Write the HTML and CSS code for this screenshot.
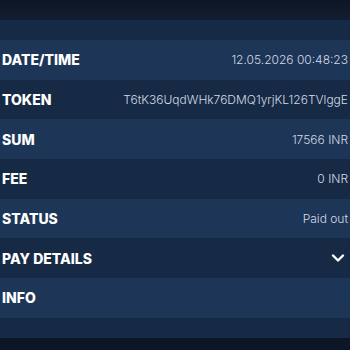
FILE: index.html
```html
<!DOCTYPE html>
<html>
<head>
<meta charset="utf-8">
<link rel="stylesheet" href="styles.css">
</head>
<body>
<div class="screen">
  <div class="fade-top"></div>
  <div class="row dark"></div>
  <div class="row light"><span class="label">DATE/TIME</span><span class="value">12.05.2026 00:48:23</span></div>
  <div class="row dark"><span class="label">TOKEN</span><span class="value">T6tK36UqdWHk76DMQ1yrjKL126TVlggE</span></div>
  <div class="row light"><span class="label">SUM</span><span class="value">17566 INR</span></div>
  <div class="row dark"><span class="label">FEE</span><span class="value">0 INR</span></div>
  <div class="row light"><span class="label">STATUS</span><span class="value">Paid out</span></div>
  <div class="row dark"><span class="label">PAY DETAILS</span>
    <svg class="chev" width="14" height="10" viewBox="0 0 14 10"><path d="M2 2.5 L7 7.5 L12 2.5" fill="none" stroke="#ffffff" stroke-width="2.4" stroke-linecap="round" stroke-linejoin="round"/></svg>
  </div>
  <div class="row light"><span class="label">INFO</span></div>
  <div class="row dark"></div>
  <div class="fade-bottom"></div>
</div>
</body>
</html>
```
FILE: styles.css
```css
html, body {
  margin: 0;
  padding: 0;
  background: #0e1828;
}
.screen {
  width: 350px;
  height: 350px;
  display: flex;
  flex-direction: column;
  overflow: hidden;
  font-family: "Inter", "Noto Sans", sans-serif;
}
.fade-top {
  height: 20px;
  flex: none;
  background: linear-gradient(#0d1625, #111d31);
}
.row {
  height: 39.7px;
  flex: none;
  display: flex;
  align-items: center;
  justify-content: space-between;
  padding: 0 2px;
  box-sizing: border-box;
}
.fade-top + .row { height: 20px; }
.row:empty { height: 20px; }
.light { background: #1d3557; }
.dark { background: #172a45; }
.label {
  color: #ffffff;
  font-weight: 800;
  font-size: 14px;
}
.value {
  color: #d3dae6;
  font-weight: 300;
  font-size: 12px;
}
.chev { margin-right: 3px; }
.fade-bottom {
  flex: 1;
  background: #0d1626;
}
```
